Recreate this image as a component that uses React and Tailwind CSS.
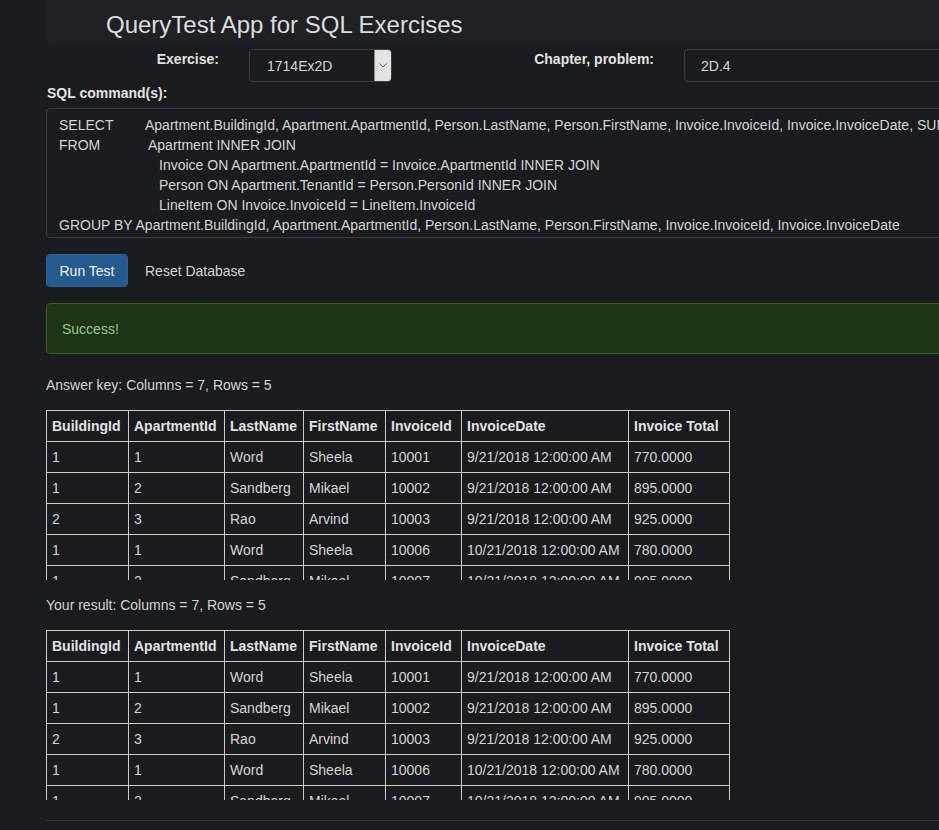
import React from "react";

const headers = ["BuildingId", "ApartmentId", "LastName", "FirstName", "InvoiceId", "InvoiceDate", "Invoice Total"];
const rows = [
  ["1", "1", "Word", "Sheela", "10001", "9/21/2018 12:00:00 AM", "770.0000"],
  ["1", "2", "Sandberg", "Mikael", "10002", "9/21/2018 12:00:00 AM", "895.0000"],
  ["2", "3", "Rao", "Arvind", "10003", "9/21/2018 12:00:00 AM", "925.0000"],
  ["1", "1", "Word", "Sheela", "10006", "10/21/2018 12:00:00 AM", "780.0000"],
  ["1", "2", "Sandberg", "Mikael", "10007", "10/21/2018 12:00:00 AM", "905.0000"],
];
const widths = [82, 96, 79, 82, 76, 167, 101];

function ResultTable() {
  return (
    <div className="h-[170px] overflow-hidden">
      <table className="table-fixed w-[683px] border-collapse">
        <colgroup>
          {widths.map((w, i) => (
            <col key={i} style={{ width: w }} />
          ))}
        </colgroup>
        <thead>
          <tr>
            {headers.map((h) => (
              <th key={h} className="border border-[#cfcbc4] px-[5px] py-[5px] text-left font-bold leading-[20px] whitespace-nowrap text-[#e2e2e2]">
                {h}
              </th>
            ))}
          </tr>
        </thead>
        <tbody>
          {rows.map((r, i) => (
            <tr key={i}>
              {r.map((c, j) => (
                <td key={j} className="border border-[#cfcbc4] px-[5px] py-[5px] leading-[20px] whitespace-nowrap">
                  {c}
                </td>
              ))}
            </tr>
          ))}
        </tbody>
      </table>
    </div>
  );
}

export default function App() {
  return (
    <div className="w-[939px] min-h-[830px] overflow-hidden bg-[#1b1c1f] text-[#d4d4d4] text-[14px] leading-[20px]" style={{ fontFamily: '"Liberation Sans", Arial, sans-serif' }}>
      <div className="ml-[46px] w-[1100px]">
        <div className="h-[44px] bg-[#202124] rounded-bl-[6px] pl-[60px]">
          <div className="text-[24px] leading-[27px] pt-[11px] text-[#dcdcdc]">QueryTest App for SQL Exercises</div>
        </div>

        <div className="flex items-start pt-[5px]">
          <div className="w-[203px] pr-[30px] text-right font-bold text-[#e2e2e2]">Exercise:</div>
          <div className="flex w-[143px] h-[33px] border border-[#3d3e42] rounded-[4px] overflow-hidden">
            <div className="flex-1 bg-[#1b1c1f] pl-[17px] flex items-center pt-[1px]">1714Ex2D</div>
            <div className="w-[17px] bg-[#e3e3e3] flex items-center justify-center border-l border-[#8a8a8a]">
              <svg width="8" height="5" viewBox="0 0 8 5">
                <path d="M0.5 0.5 L4 4 L7.5 0.5" fill="none" stroke="#555" strokeWidth="1" />
              </svg>
            </div>
          </div>
          <div className="w-[292px] pr-[30px] text-right font-bold text-[#e2e2e2]">Chapter, problem:</div>
          <div className="w-[400px] h-[33px] border border-[#3d3e42] rounded-[4px] pl-[16px] flex items-center pt-[1px]">2D.4</div>
        </div>

        <div className="mt-[1px] font-bold text-[#e2e2e2] pl-[1px]">SQL command(s):</div>

        <div className="mt-[5px] h-[130px] border border-[#3d3e42] rounded-[4px] pl-[12px] pt-[6px] overflow-hidden whitespace-nowrap">
          <div className="flex">
            <span className="w-[86px] shrink-0">SELECT</span>
            <span>Apartment.BuildingId, Apartment.ApartmentId, Person.LastName, Person.FirstName, Invoice.InvoiceId, Invoice.InvoiceDate, SUM(LineItem.Amount) AS [Invoice Total]</span>
          </div>
          <div className="flex">
            <span className="w-[89px] shrink-0">FROM</span>
            <span>Apartment INNER JOIN</span>
          </div>
          <div className="pl-[100px]">Invoice ON Apartment.ApartmentId = Invoice.ApartmentId INNER JOIN</div>
          <div className="pl-[100px]">Person ON Apartment.TenantId = Person.PersonId INNER JOIN</div>
          <div className="pl-[100px]">LineItem ON Invoice.InvoiceId = LineItem.InvoiceId</div>
          <div>GROUP BY Apartment.BuildingId, Apartment.ApartmentId, Person.LastName, Person.FirstName, Invoice.InvoiceId, Invoice.InvoiceDate</div>
        </div>

        <div className="mt-[16px] flex items-center gap-[17px]">
          <button className="w-[82px] h-[33px] bg-[#245b8c] border border-[#2a6396] rounded-[4px] text-[#f0f0f0] text-[14px]">Run Test</button>
          <span className="text-[#d4d4d4]">Reset Database</span>
        </div>

        <div className="mt-[16px] h-[51px] w-[1000px] border border-[#3c5e22] bg-[#1f3517] rounded-[4px] pl-[15px] flex items-center text-[#94c98a]">
          Success!
        </div>

        <div className="mt-[21px]">Answer key: Columns = 7, Rows = 5</div>
        <div className="mt-[15px]">
          <ResultTable />
        </div>

        <div className="mt-[15px]">Your result: Columns = 7, Rows = 5</div>
        <div className="mt-[15px]">
          <ResultTable />
        </div>

        <div className="mt-[20px] border-t border-[#38393c]" />
        <div className="h-[20px]" />
      </div>
    </div>
  );
}
